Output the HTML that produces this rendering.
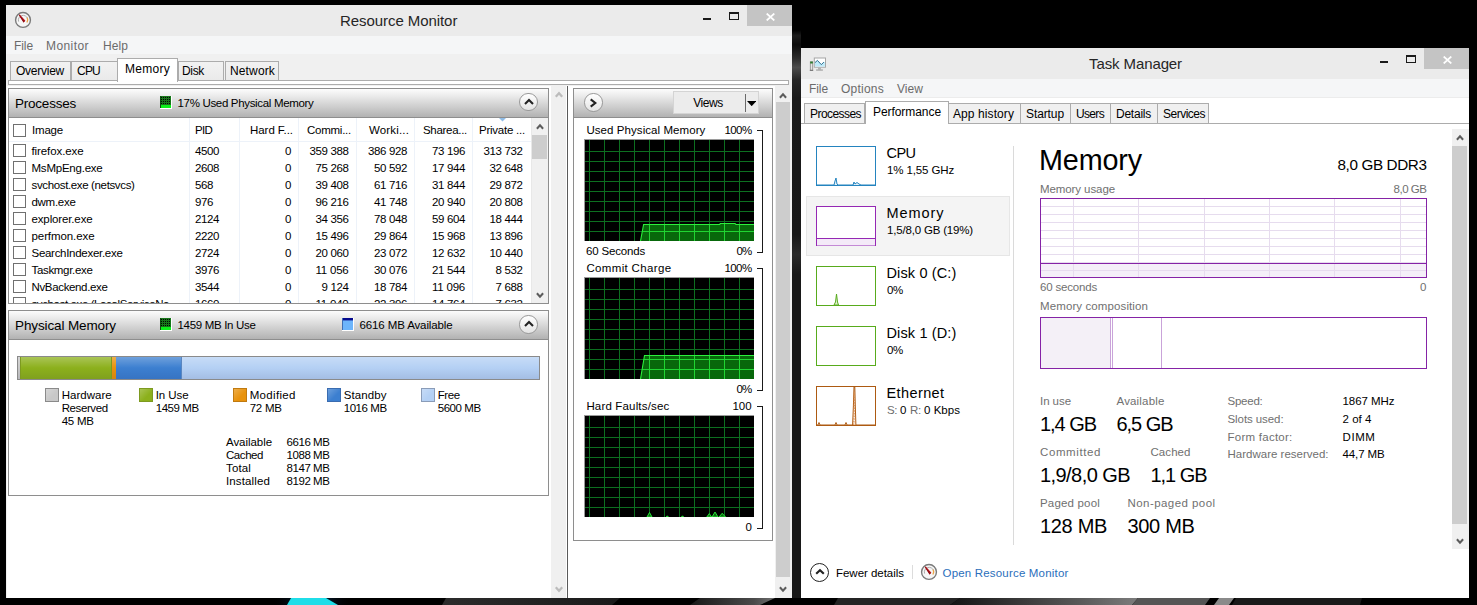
<!DOCTYPE html>
<html lang="en"><head><meta charset="utf-8"><title>Resource Monitor / Task Manager</title>
<style>
html,body{margin:0;padding:0}
body{width:1477px;height:605px;overflow:hidden;background:#000;position:relative;font-family:"Liberation Sans",sans-serif}
.bg{position:absolute;left:0;top:0;width:1477px;height:605px;background:#000}
.r{position:absolute;display:block}
.t{position:absolute;white-space:nowrap;line-height:1}
</style></head><body>
<div class="bg"></div>
<div class="r" style="left:792px;top:30px;width:9px;height:568px;background:linear-gradient(180deg,#000 0%,#1c1c1c 1%,#0c0c0c 2.6%,#2c2c2c 5%,#4c4c4c 6.6%,#262626 8.8%,#1a1a1a 12%,#181818 36%,#2a2a2a 39.5%,#181818 43%,#181818 100%)"></div>
<svg class="r" style="left:0;top:598px" width="1477" height="7" viewBox="0 0 1477 7"><defs><linearGradient id="wg1" x1="0" x2="1" y1="0" y2="0"><stop offset="0" stop-color="#2c2c2c"/><stop offset="1" stop-color="#1a1a1a"/></linearGradient><linearGradient id="wg2" x1="0" x2="1" y1="0" y2="0"><stop offset="0" stop-color="#181818"/><stop offset="0.75" stop-color="#4a4a4a"/><stop offset="1" stop-color="#707070"/></linearGradient><linearGradient id="wg3" x1="0" x2="1" y1="0" y2="0"><stop offset="0" stop-color="#141414"/><stop offset="0.7" stop-color="#5a5a5a"/><stop offset="1" stop-color="#7c7c7c"/></linearGradient><linearGradient id="wg4" x1="0" x2="1" y1="0" y2="0"><stop offset="0" stop-color="#000" stop-opacity="0"/><stop offset="0.5" stop-color="#0c3a66"/><stop offset="1" stop-color="#000" stop-opacity="0"/></linearGradient></defs><rect width="1477" height="7" fill="#000"/><rect x="272" y="0" width="80" height="7" fill="url(#wg4)"/><path d="M291 0 L326 0 L338 7 L287 7 Z" fill="#1fdde8"/><path d="M446 0 L620 0 L612 7 L442 7 Z" fill="url(#wg1)"/><path d="M700 0 L775 0 L760 7 L690 7 Z" fill="url(#wg2)"/><path d="M838 0 L960 0 L950 7 L834 7 Z" fill="#242424"/><path d="M960 0 L1138 0 L1132 7 L950 7 Z" fill="url(#wg3)"/><path d="M1138 0 L1210 0 L1205 7 L1132 7 Z" fill="#555"/><path d="M1219 0 L1234 0 L1229 7 L1214 7 Z" fill="#8a8a8a"/><path d="M1236 0 L1362 0 L1360 7 L1232 7 Z" fill="#1a1a1a"/></svg>
<div class="r" style="left:6px;top:5px;width:786px;height:593px;background:#f0f0f0"></div>
<div class="r" style="left:6px;top:5px;width:786px;height:31px;background:#ebebeb"></div>
<div class="r" style="left:6px;top:36px;width:786px;height:18px;background:#f5f6f7"></div>
<svg class="r" style="left:14px;top:11px" width="18" height="18" viewBox="0 0 18 18"><circle cx="9" cy="8.9" r="7.45" fill="#f6f6f6" stroke="#7a7a7a" stroke-width="1.4"/><path d="M4.6 10.6 A4.7 4.7 0 1 1 13.6 7.6" fill="none" stroke="#adadad" stroke-width="1"/><path d="M13.1 6.6 A4.7 4.7 0 0 1 12.9 11.5" fill="none" stroke="#e9a545" stroke-width="1.3"/><path d="M4.8 4.1 L5.8 3.6 L11.4 9.8 L9.6 11.4 Z" fill="#b5131b"/><path d="M4.8 4.1 L5.3 3.85 L10.5 10.6 L9.6 11.4 Z" fill="#8e0d13"/></svg>
<div class="t" style="left:340.0px;top:12.8px;font-size:15px;color:#262626;letter-spacing:-0.067px;">Resource Monitor</div>
<div class="r" style="left:703px;top:18px;width:8px;height:2px;background:#1a1a1a"></div>
<div class="r" style="left:729px;top:12px;width:10px;height:8px;border:1px solid #1a1a1a;border-top-width:2px;box-sizing:border-box"></div>
<div class="r" style="left:747px;top:5px;width:45px;height:21px;background:#c4c4c4"></div>
<svg class="r" style="left:765.5px;top:12.5px" width="9" height="8" viewBox="0 0 9 8"><path d="M0.7 0.5 L8.3 7.5 M8.3 0.5 L0.7 7.5" stroke="#fff" stroke-width="1.7" fill="none"/></svg>
<div class="t" style="left:14.0px;top:39.9px;font-size:12px;color:#6b6b6b;letter-spacing:-0.084px;">File</div>
<div class="t" style="left:46.0px;top:39.9px;font-size:12px;color:#6b6b6b;letter-spacing:0.427px;">Monitor</div>
<div class="t" style="left:103.0px;top:39.9px;font-size:12px;color:#6b6b6b;letter-spacing:0.080px;">Help</div>
<div class="r" style="left:8px;top:80px;width:781px;height:5px;background:#fff;border:1px solid #acacac;box-sizing:border-box"></div>
<div class="r" style="left:10px;top:60.5px;width:61px;height:20.5px;background:linear-gradient(180deg,#f2f2f2,#eaeaea);border:1px solid #acacac;box-sizing:border-box"></div>
<div class="t" style="left:16.0px;top:64.9px;font-size:12px;color:#000;letter-spacing:-0.251px;">Overview</div>
<div class="r" style="left:71px;top:60.5px;width:47px;height:20.5px;background:linear-gradient(180deg,#f2f2f2,#eaeaea);border:1px solid #acacac;box-sizing:border-box"></div>
<div class="t" style="left:77.0px;top:64.9px;font-size:12px;color:#000;letter-spacing:-0.779px;">CPU</div>
<div class="r" style="left:178px;top:60.5px;width:46px;height:20.5px;background:linear-gradient(180deg,#f2f2f2,#eaeaea);border:1px solid #acacac;box-sizing:border-box"></div>
<div class="t" style="left:182.0px;top:64.9px;font-size:12px;color:#000;letter-spacing:-0.333px;">Disk</div>
<div class="r" style="left:224.5px;top:60.5px;width:54px;height:20.5px;background:linear-gradient(180deg,#f2f2f2,#eaeaea);border:1px solid #acacac;box-sizing:border-box"></div>
<div class="t" style="left:230.0px;top:64.9px;font-size:12px;color:#000;letter-spacing:0.142px;">Network</div>
<div class="r" style="left:117px;top:58px;width:61px;height:24px;background:#fff;border:1px solid #acacac;border-bottom:none;box-sizing:border-box"></div>
<div class="t" style="left:125.0px;top:63.4px;font-size:12px;color:#000;letter-spacing:0.278px;">Memory</div>
<div class="r" style="left:7px;top:86px;width:785px;height:512px;background:#fff"></div>
<div class="r" style="left:551px;top:86px;width:15px;height:512px;background:#f0f0f0"></div>
<svg class="r" style="left:548.6px;top:85.2px" width="20" height="20" viewBox="0 0 20 20"><path d="M6.8 11.8 L10 8.2 L13.2 11.8" fill="none" stroke="#bcbcbc" stroke-width="2.2"/></svg>
<svg class="r" style="left:548.6px;top:579px" width="20" height="20" viewBox="0 0 20 20"><path d="M6.8 8.2 L10 11.8 L13.2 8.2" fill="none" stroke="#bcbcbc" stroke-width="2.2"/></svg>
<div class="r" style="left:567px;top:86px;width:1px;height:512px;background:#5a5a5a"></div>
<div class="r" style="left:775px;top:86px;width:17px;height:512px;background:#f0f0f0"></div>
<div class="r" style="left:775.5px;top:102px;width:14.5px;height:475.4px;background:#cdcdcd"></div>
<svg class="r" style="left:772.6px;top:85.6px" width="20" height="20" viewBox="0 0 20 20"><path d="M6.9 11.75 L10 8.25 L13.1 11.75" fill="none" stroke="#5c5c5c" stroke-width="2"/></svg>
<svg class="r" style="left:772.6px;top:578.5px" width="20" height="20" viewBox="0 0 20 20"><path d="M6.9 8.25 L10 11.75 L13.1 8.25" fill="none" stroke="#5c5c5c" stroke-width="2"/></svg>
<div class="r" style="left:8px;top:88px;width:541px;height:216px;border:1px solid #8e8e8e;box-sizing:border-box;background:#fff"></div>
<div class="r" style="left:9px;top:89px;width:539px;height:28px;background:linear-gradient(180deg,#fcfcfc 0%,#ededed 22%,#d4d4d4 55%,#b2b2b2 100%)"></div>
<div class="r" style="left:9px;top:117px;width:539px;height:1px;background:#8e8e8e"></div>
<div class="t" style="left:15.0px;top:96.6px;font-size:13.5px;color:#000;letter-spacing:-0.225px;">Processes</div>
<svg class="r" style="left:160px;top:96px" width="12" height="13" viewBox="0 0 12 13"><rect width="12" height="13" fill="#fff"/><rect x="0" y="0" width="11" height="12" fill="#17761a"/><path d="M1 1.5H11 M1 3.5H11 M1 5.5H11 M1 7.5H11" stroke="#020a02" stroke-width="1" stroke-dasharray="1 1" fill="none"/><rect x="1" y="9" width="10" height="3" fill="#0cf01a"/><rect x="0" y="0" width="1" height="12" fill="#0b4d0e"/></svg>
<div class="t" style="left:177.5px;top:97.7px;font-size:11.5px;color:#000;letter-spacing:-0.325px;">17% Used Physical Memory</div>
<div class="r" style="left:519.2px;top:93.1px;width:18.4px;height:18.4px;border-radius:50%;background:linear-gradient(180deg,#fff,#e4e4e4);border:1px solid #9a9a9a;box-sizing:border-box"></div>
<svg class="r" style="left:518.6px;top:91.9px" width="20" height="20" viewBox="0 0 20 20"><path d="M6 11.95 L10 8.05 L14 11.95" fill="none" stroke="#222" stroke-width="2.1"/></svg>
<div class="r" style="left:9px;top:141px;width:522px;height:1px;background:#edf2f9"></div>
<div class="r" style="left:189px;top:118px;width:1px;height:185px;background:#edf2f9"></div>
<div class="r" style="left:239px;top:118px;width:1px;height:185px;background:#edf2f9"></div>
<div class="r" style="left:298px;top:118px;width:1px;height:185px;background:#edf2f9"></div>
<div class="r" style="left:356px;top:118px;width:1px;height:185px;background:#edf2f9"></div>
<div class="r" style="left:414px;top:118px;width:1px;height:185px;background:#edf2f9"></div>
<div class="r" style="left:472px;top:118px;width:1px;height:185px;background:#edf2f9"></div>
<div class="r" style="left:531px;top:118px;width:1px;height:185px;background:#e8e8e8"></div>
<div class="r" style="left:13px;top:124px;width:13px;height:13px;border:1px solid #707070;background:#fff;box-sizing:border-box"></div>
<div class="t" style="left:32.0px;top:124.7px;font-size:11.5px;color:#000;letter-spacing:-0.192px;">Image</div>
<div class="t" style="left:195.0px;top:124.7px;font-size:11.5px;color:#000;letter-spacing:-0.724px;">PID</div>
<div class="t" style="left:250.0px;top:124.7px;font-size:11.5px;color:#000;letter-spacing:-0.050px;">Hard F...</div>
<div class="t" style="left:307.0px;top:124.7px;font-size:11.5px;color:#000;letter-spacing:-0.250px;">Commi...</div>
<div class="t" style="left:369.0px;top:124.7px;font-size:11.5px;color:#000;letter-spacing:0.155px;">Worki...</div>
<div class="t" style="left:423.0px;top:124.7px;font-size:11.5px;color:#000;letter-spacing:-0.296px;">Sharea...</div>
<div class="t" style="left:479.0px;top:124.7px;font-size:11.5px;color:#000;letter-spacing:-0.234px;">Private ...</div>
<svg class="r" style="left:499px;top:118px" width="7" height="4" viewBox="0 0 7 4"><path d="M0 0 L7 0 L3.5 3.6 Z" fill="#8fbce6"/></svg>
<div class="r" style="left:9px;top:142px;width:522px;height:161px;overflow:hidden">
<div class="r" style="left:4px;top:2px;width:13px;height:13px;border:1px solid #707070;background:#fff;box-sizing:border-box"></div>
<div class="t" style="left:22.5px;top:4.1px;font-size:11.5px;color:#000;letter-spacing:-0.095px;">firefox.exe</div>
<div class="t" style="left:186.0px;top:4.1px;font-size:11.5px;color:#000;letter-spacing:-0.395px;">4500</div>
<div class="t" style="left:276.0px;top:4.1px;font-size:11.5px;color:#000;letter-spacing:-0.395px;">0</div>
<div class="t" style="left:300.5px;top:4.1px;font-size:11.5px;color:#000;letter-spacing:-0.366px;">359 388</div>
<div class="t" style="left:359.0px;top:4.1px;font-size:11.5px;color:#000;letter-spacing:-0.366px;">386 928</div>
<div class="t" style="left:423.0px;top:4.1px;font-size:11.5px;color:#000;letter-spacing:-0.362px;">73 196</div>
<div class="t" style="left:474.5px;top:4.1px;font-size:11.5px;color:#000;letter-spacing:-0.366px;">313 732</div>
<div class="r" style="left:4px;top:19px;width:13px;height:13px;border:1px solid #707070;background:#fff;box-sizing:border-box"></div>
<div class="t" style="left:22.5px;top:21.1px;font-size:11.5px;color:#000;letter-spacing:-0.227px;">MsMpEng.exe</div>
<div class="t" style="left:186.0px;top:21.1px;font-size:11.5px;color:#000;letter-spacing:-0.395px;">2608</div>
<div class="t" style="left:276.0px;top:21.1px;font-size:11.5px;color:#000;letter-spacing:-0.395px;">0</div>
<div class="t" style="left:306.5px;top:21.1px;font-size:11.5px;color:#000;letter-spacing:-0.362px;">75 268</div>
<div class="t" style="left:365.0px;top:21.1px;font-size:11.5px;color:#000;letter-spacing:-0.362px;">50 592</div>
<div class="t" style="left:423.0px;top:21.1px;font-size:11.5px;color:#000;letter-spacing:-0.362px;">17 944</div>
<div class="t" style="left:480.5px;top:21.1px;font-size:11.5px;color:#000;letter-spacing:-0.362px;">32 648</div>
<div class="r" style="left:4px;top:36px;width:13px;height:13px;border:1px solid #707070;background:#fff;box-sizing:border-box"></div>
<div class="t" style="left:22.5px;top:38.1px;font-size:11.5px;color:#000;letter-spacing:-0.360px;">svchost.exe (netsvcs)</div>
<div class="t" style="left:186.0px;top:38.1px;font-size:11.5px;color:#000;letter-spacing:-0.395px;">568</div>
<div class="t" style="left:276.0px;top:38.1px;font-size:11.5px;color:#000;letter-spacing:-0.395px;">0</div>
<div class="t" style="left:306.5px;top:38.1px;font-size:11.5px;color:#000;letter-spacing:-0.362px;">39 408</div>
<div class="t" style="left:365.0px;top:38.1px;font-size:11.5px;color:#000;letter-spacing:-0.362px;">61 716</div>
<div class="t" style="left:423.0px;top:38.1px;font-size:11.5px;color:#000;letter-spacing:-0.362px;">31 844</div>
<div class="t" style="left:480.5px;top:38.1px;font-size:11.5px;color:#000;letter-spacing:-0.362px;">29 872</div>
<div class="r" style="left:4px;top:53px;width:13px;height:13px;border:1px solid #707070;background:#fff;box-sizing:border-box"></div>
<div class="t" style="left:22.5px;top:55.1px;font-size:11.5px;color:#000;letter-spacing:-0.288px;">dwm.exe</div>
<div class="t" style="left:186.0px;top:55.1px;font-size:11.5px;color:#000;letter-spacing:-0.395px;">976</div>
<div class="t" style="left:276.0px;top:55.1px;font-size:11.5px;color:#000;letter-spacing:-0.395px;">0</div>
<div class="t" style="left:306.5px;top:55.1px;font-size:11.5px;color:#000;letter-spacing:-0.362px;">96 216</div>
<div class="t" style="left:365.0px;top:55.1px;font-size:11.5px;color:#000;letter-spacing:-0.362px;">41 748</div>
<div class="t" style="left:423.0px;top:55.1px;font-size:11.5px;color:#000;letter-spacing:-0.362px;">20 940</div>
<div class="t" style="left:480.5px;top:55.1px;font-size:11.5px;color:#000;letter-spacing:-0.362px;">20 808</div>
<div class="r" style="left:4px;top:70px;width:13px;height:13px;border:1px solid #707070;background:#fff;box-sizing:border-box"></div>
<div class="t" style="left:22.5px;top:72.1px;font-size:11.5px;color:#000;letter-spacing:-0.137px;">explorer.exe</div>
<div class="t" style="left:186.0px;top:72.1px;font-size:11.5px;color:#000;letter-spacing:-0.395px;">2124</div>
<div class="t" style="left:276.0px;top:72.1px;font-size:11.5px;color:#000;letter-spacing:-0.395px;">0</div>
<div class="t" style="left:306.5px;top:72.1px;font-size:11.5px;color:#000;letter-spacing:-0.362px;">34 356</div>
<div class="t" style="left:365.0px;top:72.1px;font-size:11.5px;color:#000;letter-spacing:-0.362px;">78 048</div>
<div class="t" style="left:423.0px;top:72.1px;font-size:11.5px;color:#000;letter-spacing:-0.362px;">59 604</div>
<div class="t" style="left:480.5px;top:72.1px;font-size:11.5px;color:#000;letter-spacing:-0.362px;">18 444</div>
<div class="r" style="left:4px;top:87px;width:13px;height:13px;border:1px solid #707070;background:#fff;box-sizing:border-box"></div>
<div class="t" style="left:22.5px;top:89.1px;font-size:11.5px;color:#000;letter-spacing:-0.083px;">perfmon.exe</div>
<div class="t" style="left:186.0px;top:89.1px;font-size:11.5px;color:#000;letter-spacing:-0.395px;">2220</div>
<div class="t" style="left:276.0px;top:89.1px;font-size:11.5px;color:#000;letter-spacing:-0.395px;">0</div>
<div class="t" style="left:306.5px;top:89.1px;font-size:11.5px;color:#000;letter-spacing:-0.362px;">15 496</div>
<div class="t" style="left:365.0px;top:89.1px;font-size:11.5px;color:#000;letter-spacing:-0.362px;">29 864</div>
<div class="t" style="left:423.0px;top:89.1px;font-size:11.5px;color:#000;letter-spacing:-0.362px;">15 968</div>
<div class="t" style="left:480.5px;top:89.1px;font-size:11.5px;color:#000;letter-spacing:-0.362px;">13 896</div>
<div class="r" style="left:4px;top:104px;width:13px;height:13px;border:1px solid #707070;background:#fff;box-sizing:border-box"></div>
<div class="t" style="left:22.5px;top:106.1px;font-size:11.5px;color:#000;letter-spacing:-0.288px;">SearchIndexer.exe</div>
<div class="t" style="left:186.0px;top:106.1px;font-size:11.5px;color:#000;letter-spacing:-0.395px;">2724</div>
<div class="t" style="left:276.0px;top:106.1px;font-size:11.5px;color:#000;letter-spacing:-0.395px;">0</div>
<div class="t" style="left:306.5px;top:106.1px;font-size:11.5px;color:#000;letter-spacing:-0.362px;">20 060</div>
<div class="t" style="left:365.0px;top:106.1px;font-size:11.5px;color:#000;letter-spacing:-0.362px;">23 072</div>
<div class="t" style="left:423.0px;top:106.1px;font-size:11.5px;color:#000;letter-spacing:-0.362px;">12 632</div>
<div class="t" style="left:480.5px;top:106.1px;font-size:11.5px;color:#000;letter-spacing:-0.362px;">10 440</div>
<div class="r" style="left:4px;top:121px;width:13px;height:13px;border:1px solid #707070;background:#fff;box-sizing:border-box"></div>
<div class="t" style="left:22.5px;top:123.1px;font-size:11.5px;color:#000;letter-spacing:-0.323px;">Taskmgr.exe</div>
<div class="t" style="left:186.0px;top:123.1px;font-size:11.5px;color:#000;letter-spacing:-0.395px;">3976</div>
<div class="t" style="left:276.0px;top:123.1px;font-size:11.5px;color:#000;letter-spacing:-0.395px;">0</div>
<div class="t" style="left:306.5px;top:123.1px;font-size:11.5px;color:#000;letter-spacing:-0.219px;">11 056</div>
<div class="t" style="left:365.0px;top:123.1px;font-size:11.5px;color:#000;letter-spacing:-0.362px;">30 076</div>
<div class="t" style="left:423.0px;top:123.1px;font-size:11.5px;color:#000;letter-spacing:-0.362px;">21 544</div>
<div class="t" style="left:486.5px;top:123.1px;font-size:11.5px;color:#000;letter-spacing:-0.355px;">8 532</div>
<div class="r" style="left:4px;top:138px;width:13px;height:13px;border:1px solid #707070;background:#fff;box-sizing:border-box"></div>
<div class="t" style="left:22.5px;top:140.1px;font-size:11.5px;color:#000;letter-spacing:-0.349px;">NvBackend.exe</div>
<div class="t" style="left:186.0px;top:140.1px;font-size:11.5px;color:#000;letter-spacing:-0.395px;">3544</div>
<div class="t" style="left:276.0px;top:140.1px;font-size:11.5px;color:#000;letter-spacing:-0.395px;">0</div>
<div class="t" style="left:312.5px;top:140.1px;font-size:11.5px;color:#000;letter-spacing:-0.355px;">9 124</div>
<div class="t" style="left:365.0px;top:140.1px;font-size:11.5px;color:#000;letter-spacing:-0.362px;">18 784</div>
<div class="t" style="left:423.0px;top:140.1px;font-size:11.5px;color:#000;letter-spacing:-0.219px;">11 096</div>
<div class="t" style="left:486.5px;top:140.1px;font-size:11.5px;color:#000;letter-spacing:-0.355px;">7 688</div>
<div class="r" style="left:4px;top:155px;width:13px;height:13px;border:1px solid #707070;background:#fff;box-sizing:border-box"></div>
<div class="t" style="left:22.5px;top:157.1px;font-size:11.5px;color:#000;letter-spacing:-0.395px;">svchost.exe (LocalServiceNo...</div>
<div class="t" style="left:186.0px;top:157.1px;font-size:11.5px;color:#000;letter-spacing:-0.395px;">1660</div>
<div class="t" style="left:276.0px;top:157.1px;font-size:11.5px;color:#000;letter-spacing:-0.395px;">0</div>
<div class="t" style="left:306.5px;top:157.1px;font-size:11.5px;color:#000;letter-spacing:-0.219px;">11 040</div>
<div class="t" style="left:365.0px;top:157.1px;font-size:11.5px;color:#000;letter-spacing:-0.362px;">22 396</div>
<div class="t" style="left:423.0px;top:157.1px;font-size:11.5px;color:#000;letter-spacing:-0.362px;">14 764</div>
<div class="t" style="left:486.5px;top:157.1px;font-size:11.5px;color:#000;letter-spacing:-0.355px;">7 632</div>
</div>
<div class="r" style="left:532px;top:118px;width:16px;height:185px;background:#f0f0f0"></div>
<div class="r" style="left:532px;top:135px;width:15px;height:24px;background:#cdcdcd"></div>
<svg class="r" style="left:529.6px;top:117.4px" width="20" height="20" viewBox="0 0 20 20"><path d="M6.9 11.75 L10 8.25 L13.1 11.75" fill="none" stroke="#5c5c5c" stroke-width="2"/></svg>
<svg class="r" style="left:529.5px;top:284.6px" width="20" height="20" viewBox="0 0 20 20"><path d="M6.9 8.25 L10 11.75 L13.1 8.25" fill="none" stroke="#5c5c5c" stroke-width="2"/></svg>
<div class="r" style="left:8px;top:310px;width:541px;height:186px;border:1px solid #8e8e8e;box-sizing:border-box;background:#fff"></div>
<div class="r" style="left:9px;top:311px;width:539px;height:28px;background:linear-gradient(180deg,#fcfcfc 0%,#ededed 22%,#d4d4d4 55%,#b2b2b2 100%)"></div>
<div class="r" style="left:9px;top:339px;width:539px;height:1px;background:#8e8e8e"></div>
<div class="t" style="left:15.0px;top:318.6px;font-size:13.5px;color:#000;letter-spacing:-0.118px;">Physical Memory</div>
<svg class="r" style="left:160px;top:318px" width="12" height="13" viewBox="0 0 12 13"><rect width="12" height="13" fill="#fff"/><rect x="0" y="0" width="11" height="12" fill="#17761a"/><path d="M1 1.5H11 M1 3.5H11 M1 5.5H11 M1 7.5H11" stroke="#020a02" stroke-width="1" stroke-dasharray="1 1" fill="none"/><rect x="1" y="9" width="10" height="3" fill="#0cf01a"/><rect x="0" y="0" width="1" height="12" fill="#0b4d0e"/></svg>
<div class="t" style="left:177.5px;top:319.7px;font-size:11.5px;color:#000;letter-spacing:-0.318px;">1459 MB In Use</div>
<svg class="r" style="left:342px;top:318px" width="12" height="13" viewBox="0 0 12 13"><rect width="12" height="13" fill="#fff"/><rect x="0" y="0" width="11" height="12" fill="#6db5fb"/><rect x="0" y="0" width="11" height="2.4" fill="#050a8e"/><rect x="0" y="0" width="1" height="12" fill="#3f6fb4"/></svg>
<div class="t" style="left:359.5px;top:319.7px;font-size:11.5px;color:#000;letter-spacing:-0.120px;">6616 MB Available</div>
<div class="r" style="left:519.2px;top:315.3px;width:18.4px;height:18.4px;border-radius:50%;background:linear-gradient(180deg,#fff,#e4e4e4);border:1px solid #9a9a9a;box-sizing:border-box"></div>
<svg class="r" style="left:518.6px;top:314.1px" width="20" height="20" viewBox="0 0 20 20"><path d="M6 11.95 L10 8.05 L14 11.95" fill="none" stroke="#222" stroke-width="2.1"/></svg>
<div class="r" style="left:17px;top:356px;width:523px;height:24px;border:1px solid #8a8a8a;box-sizing:border-box;background:linear-gradient(180deg,rgba(255,255,255,.26) 0%,rgba(255,255,255,0) 50%,rgba(0,0,60,.09) 100%),linear-gradient(90deg,#c8c8c8 0,#c8c8c8 2px,#8cb01c 2px,#8cb01c 93.5px,#e8920c 93.5px,#e8920c 98.5px,#3c7fd0 98.5px,#3c7fd0 163.5px,#b4d0f4 163.5px)"></div>
<div class="r" style="left:20px;top:357px;width:1px;height:22px;background:#7d9a20"></div>
<div class="r" style="left:111px;top:357px;width:1px;height:22px;background:#7d9a20"></div>
<div class="r" style="left:181px;top:357px;width:1px;height:22px;background:#5a86c0"></div>
<div class="r" style="left:44.7px;top:388px;width:14px;height:14px;background:linear-gradient(135deg,rgba(255,255,255,.25),rgba(255,255,255,0) 60%),#c8c8c8;border:1px solid #8a8a8a;box-sizing:border-box"></div>
<div class="t" style="left:61.7px;top:389.7px;font-size:11.5px;color:#000;letter-spacing:0.019px;">Hardware</div>
<div class="t" style="left:61.7px;top:402.7px;font-size:11.5px;color:#000;letter-spacing:-0.402px;">Reserved</div>
<div class="t" style="left:61.7px;top:415.7px;font-size:11.5px;color:#000;letter-spacing:-0.247px;">45 MB</div>
<div class="r" style="left:138.7px;top:388px;width:14px;height:14px;background:linear-gradient(135deg,rgba(255,255,255,.25),rgba(255,255,255,0) 60%),#8cb01c;border:1px solid #7d9a20;box-sizing:border-box"></div>
<div class="t" style="left:155.7px;top:389.7px;font-size:11.5px;color:#000;letter-spacing:-0.039px;">In Use</div>
<div class="t" style="left:155.7px;top:402.7px;font-size:11.5px;color:#000;letter-spacing:-0.432px;">1459 MB</div>
<div class="r" style="left:232.7px;top:388px;width:14px;height:14px;background:linear-gradient(135deg,rgba(255,255,255,.25),rgba(255,255,255,0) 60%),#e8920c;border:1px solid #c07a10;box-sizing:border-box"></div>
<div class="t" style="left:249.7px;top:389.7px;font-size:11.5px;color:#000;letter-spacing:0.317px;">Modified</div>
<div class="t" style="left:249.7px;top:402.7px;font-size:11.5px;color:#000;letter-spacing:-0.247px;">72 MB</div>
<div class="r" style="left:326.7px;top:388px;width:14px;height:14px;background:linear-gradient(135deg,rgba(255,255,255,.25),rgba(255,255,255,0) 60%),#3c7fd0;border:1px solid #3a6cb0;box-sizing:border-box"></div>
<div class="t" style="left:343.7px;top:389.7px;font-size:11.5px;color:#000;letter-spacing:0.115px;">Standby</div>
<div class="t" style="left:343.7px;top:402.7px;font-size:11.5px;color:#000;letter-spacing:-0.432px;">1016 MB</div>
<div class="r" style="left:420.7px;top:388px;width:14px;height:14px;background:linear-gradient(135deg,rgba(255,255,255,.25),rgba(255,255,255,0) 60%),#b4d0f4;border:1px solid #8a9cb8;box-sizing:border-box"></div>
<div class="t" style="left:437.7px;top:389.7px;font-size:11.5px;color:#000;letter-spacing:-0.411px;">Free</div>
<div class="t" style="left:437.7px;top:402.7px;font-size:11.5px;color:#000;letter-spacing:-0.432px;">5600 MB</div>
<div class="t" style="left:226.0px;top:436.7px;font-size:11.5px;color:#000;letter-spacing:-0.051px;">Available</div>
<div class="t" style="left:286.5px;top:436.7px;font-size:11.5px;color:#000;letter-spacing:-0.432px;">6616 MB</div>
<div class="t" style="left:226.0px;top:449.7px;font-size:11.5px;color:#000;letter-spacing:-0.439px;">Cached</div>
<div class="t" style="left:286.5px;top:449.7px;font-size:11.5px;color:#000;letter-spacing:-0.432px;">1088 MB</div>
<div class="t" style="left:226.0px;top:462.7px;font-size:11.5px;color:#000;letter-spacing:0.142px;">Total</div>
<div class="t" style="left:286.5px;top:462.7px;font-size:11.5px;color:#000;letter-spacing:-0.432px;">8147 MB</div>
<div class="t" style="left:226.0px;top:475.7px;font-size:11.5px;color:#000;letter-spacing:0.130px;">Installed</div>
<div class="t" style="left:286.5px;top:475.7px;font-size:11.5px;color:#000;letter-spacing:-0.432px;">8192 MB</div>
<div class="r" style="left:573px;top:88px;width:200px;height:453px;border:1px solid #8e8e8e;box-sizing:border-box;background:#fff"></div>
<div class="r" style="left:574px;top:89px;width:198px;height:28px;background:linear-gradient(180deg,#fcfcfc 0%,#ededed 22%,#d4d4d4 55%,#b2b2b2 100%)"></div>
<div class="r" style="left:574px;top:117px;width:198px;height:1px;background:#8e8e8e"></div>
<div class="r" style="left:584.3px;top:93.4px;width:18.4px;height:18.4px;border-radius:50%;background:linear-gradient(180deg,#fff,#e4e4e4);border:1px solid #9a9a9a;box-sizing:border-box"></div>
<svg class="r" style="left:583.2px;top:92.6px" width="20" height="20" viewBox="0 0 20 20"><path d="M7.7 6.4 L12.3 10 L7.7 13.6" fill="none" stroke="#222" stroke-width="2.1"/></svg>
<div class="r" style="left:673px;top:91px;width:86px;height:23px;background:#ececec;border:1px solid #d4d4d4;box-sizing:border-box"></div>
<div class="t" style="left:693.3px;top:96.9px;font-size:12px;color:#000;letter-spacing:-0.459px;">Views</div>
<div class="r" style="left:745px;top:94px;width:1px;height:18px;background:#6a6a6a"></div>
<svg class="r" style="left:747px;top:101px" width="9.4" height="5.2" viewBox="0 0 9.4 5.2"><path d="M0 0 L9.4 0 L4.7 5.2 Z" fill="#000"/></svg>
<div class="t" style="left:586.4px;top:124.7px;font-size:11.5px;color:#000;letter-spacing:0.071px;">Used Physical Memory</div>
<div class="t" style="left:724.5px;top:124.7px;font-size:11.5px;color:#000;letter-spacing:-0.603px;">100%</div>
<svg class="r" style="left:584px;top:139px" width="170" height="102" viewBox="-1 -1 170 102"><rect x="-1" y="-1" width="170" height="102" fill="#9a9a9a"/><rect width="169" height="101" fill="#000"/><path d="M4.5 0V101 M19.5 0V101 M34.5 0V101 M49.5 0V101 M64.5 0V101 M79.5 0V101 M94.5 0V101 M109.5 0V101 M124.5 0V101 M139.5 0V101 M154.5 0V101 M169.5 0V101 M0 11.5H169 M0 21.5H169 M0 31.5H169 M0 41.5H169 M0 51.5H169 M0 61.5H169 M0 71.5H169 M0 81.5H169 M0 91.5H169" stroke="#0d6f20" stroke-width="1" fill="none"/><clipPath id="gc1"><path d="M55.5 101 L58.6 84.5 L134.5 84.5 L135.5 83.5 L150 83.5 L151 84.5 L169 84.5 L169 101 Z"/></clipPath><path d="M55.5 101 L58.6 84.5 L134.5 84.5 L135.5 83.5 L150 83.5 L151 84.5 L169 84.5 L169 101 Z" fill="#08680b"/><path d="M4.5 0V101 M19.5 0V101 M34.5 0V101 M49.5 0V101 M64.5 0V101 M79.5 0V101 M94.5 0V101 M109.5 0V101 M124.5 0V101 M139.5 0V101 M154.5 0V101 M169.5 0V101 M0 11.5H169 M0 21.5H169 M0 31.5H169 M0 41.5H169 M0 51.5H169 M0 61.5H169 M0 71.5H169 M0 81.5H169 M0 91.5H169" stroke="#20d532" stroke-width="1" fill="none" clip-path="url(#gc1)"/><path d="M55.5 101 L58.6 84.5 L134.5 84.5 L135.5 83.5 L150 83.5 L151 84.5 L169 84.5" fill="none" stroke="#2cf03c" stroke-width="1.1"/></svg>
<div class="t" style="left:586.0px;top:245.7px;font-size:11.5px;color:#000;letter-spacing:-0.174px;">60 Seconds</div>
<div class="t" style="left:736.5px;top:245.7px;font-size:11.5px;color:#000;letter-spacing:-0.811px;">0%</div>
<div class="r" style="left:757px;top:130px;width:6px;height:123px;border:1px solid #1a1a1a;border-left:none;box-sizing:border-box"></div>
<div class="t" style="left:586.4px;top:262.7px;font-size:11.5px;color:#000;letter-spacing:0.345px;">Commit Charge</div>
<div class="t" style="left:724.5px;top:262.7px;font-size:11.5px;color:#000;letter-spacing:-0.603px;">100%</div>
<svg class="r" style="left:584px;top:277px" width="170" height="102" viewBox="-1 -1 170 102"><rect x="-1" y="-1" width="170" height="102" fill="#9a9a9a"/><rect width="169" height="101" fill="#000"/><path d="M4.5 0V101 M19.5 0V101 M34.5 0V101 M49.5 0V101 M64.5 0V101 M79.5 0V101 M94.5 0V101 M109.5 0V101 M124.5 0V101 M139.5 0V101 M154.5 0V101 M169.5 0V101 M0 11.5H169 M0 21.5H169 M0 31.5H169 M0 41.5H169 M0 51.5H169 M0 61.5H169 M0 71.5H169 M0 81.5H169 M0 91.5H169" stroke="#0d6f20" stroke-width="1" fill="none"/><clipPath id="gc2"><path d="M55.5 101 L59.5 77.5 L169 77.5 L169 101 Z"/></clipPath><path d="M55.5 101 L59.5 77.5 L169 77.5 L169 101 Z" fill="#08680b"/><path d="M4.5 0V101 M19.5 0V101 M34.5 0V101 M49.5 0V101 M64.5 0V101 M79.5 0V101 M94.5 0V101 M109.5 0V101 M124.5 0V101 M139.5 0V101 M154.5 0V101 M169.5 0V101 M0 11.5H169 M0 21.5H169 M0 31.5H169 M0 41.5H169 M0 51.5H169 M0 61.5H169 M0 71.5H169 M0 81.5H169 M0 91.5H169" stroke="#20d532" stroke-width="1" fill="none" clip-path="url(#gc2)"/><path d="M55.5 101 L59.5 77.5 L169 77.5" fill="none" stroke="#2cf03c" stroke-width="1.1"/></svg>
<div class="t" style="left:736.5px;top:383.7px;font-size:11.5px;color:#000;letter-spacing:-0.811px;">0%</div>
<div class="r" style="left:757px;top:268px;width:6px;height:123px;border:1px solid #1a1a1a;border-left:none;box-sizing:border-box"></div>
<div class="t" style="left:586.4px;top:400.7px;font-size:11.5px;color:#000;letter-spacing:0.165px;">Hard Faults/sec</div>
<div class="t" style="left:732.5px;top:400.7px;font-size:11.5px;color:#000;letter-spacing:-0.062px;">100</div>
<svg class="r" style="left:584px;top:415px" width="170" height="102" viewBox="-1 -1 170 102"><rect x="-1" y="-1" width="170" height="102" fill="#9a9a9a"/><rect width="169" height="101" fill="#000"/><path d="M4.5 0V101 M19.5 0V101 M34.5 0V101 M49.5 0V101 M64.5 0V101 M79.5 0V101 M94.5 0V101 M109.5 0V101 M124.5 0V101 M139.5 0V101 M154.5 0V101 M169.5 0V101 M0 11.5H169 M0 21.5H169 M0 31.5H169 M0 41.5H169 M0 51.5H169 M0 61.5H169 M0 71.5H169 M0 81.5H169 M0 91.5H169" stroke="#0d6f20" stroke-width="1" fill="none"/><path d="M62 101 L64.5 96.5 L67 101 Z M81.3 101 L82.3 99.8 L83.3 101 Z M96.5 101 L97.5 99.8 L98.5 101 Z M121.8 101 L124.3 97.6 L126.6 101 Z M127 101 L130 96 L133 101 Z M134 101 L137.2 97.3 L140.5 101 Z" fill="#0b6a12" stroke="#2cf03c" stroke-width="0.9"/></svg>
<div class="t" style="left:745.5px;top:521.7px;font-size:11.5px;color:#000;letter-spacing:-0.395px;">0</div>
<div class="r" style="left:757px;top:406px;width:6px;height:123px;border:1px solid #1a1a1a;border-left:none;box-sizing:border-box"></div>
<div class="r" style="left:801px;top:48px;width:668px;height:550px;background:#fff"></div>
<div class="r" style="left:801px;top:48px;width:668px;height:31px;background:#ebebeb"></div>
<div class="r" style="left:801px;top:79px;width:668px;height:18px;background:#f5f6f7"></div>
<div class="r" style="left:801px;top:97px;width:668px;height:1px;background:#ececec"></div>
<svg class="r" style="left:809px;top:56px" width="18" height="16" viewBox="0 0 18 16"><rect x="1.3" y="5.8" width="2.4" height="8.4" fill="#e6e6e6" stroke="#8c8c8c" stroke-width="0.8"/><rect x="1.2" y="5.6" width="2.6" height="1.9" fill="#2b7a2b"/><rect x="0.8" y="13.9" width="3.4" height="0.9" fill="#6e6e6e"/><rect x="5.3" y="2" width="11.2" height="9.2" fill="#fff" stroke="#a6a6a6" stroke-width="1"/><path d="M5.9 6.6 L8.4 4.4 L12.3 8.6 L14.9 6.1 L15.9 6.1 L15.9 10.6 L5.9 10.6 Z" fill="#bfeaf9"/><path d="M6 6.6 L8.4 4.4 L12.3 8.6 L14.9 6.1" fill="none" stroke="#2d6f8f" stroke-width="1"/><rect x="9" y="11.6" width="3" height="1.9" fill="#b4b4b4"/><rect x="7.1" y="13.5" width="6.8" height="1.1" fill="#9a9a9a"/></svg>
<div class="t" style="left:1089.0px;top:55.8px;font-size:15px;color:#262626;letter-spacing:-0.100px;">Task Manager</div>
<div class="r" style="left:1380px;top:61px;width:8px;height:2px;background:#1a1a1a"></div>
<div class="r" style="left:1406px;top:55px;width:10px;height:8px;border:1px solid #1a1a1a;border-top-width:2px;box-sizing:border-box"></div>
<div class="r" style="left:1424px;top:48px;width:45px;height:21px;background:#c4c4c4"></div>
<svg class="r" style="left:1442.5px;top:55.5px" width="9" height="8" viewBox="0 0 9 8"><path d="M0.7 0.5 L8.3 7.5 M8.3 0.5 L0.7 7.5" stroke="#fff" stroke-width="1.7" fill="none"/></svg>
<div class="t" style="left:809.0px;top:82.9px;font-size:12px;color:#6b6b6b;letter-spacing:-0.084px;">File</div>
<div class="t" style="left:841.0px;top:82.9px;font-size:12px;color:#6b6b6b;letter-spacing:0.235px;">Options</div>
<div class="t" style="left:897.0px;top:82.9px;font-size:12px;color:#6b6b6b;letter-spacing:0.052px;">View</div>
<div class="r" style="left:801px;top:123px;width:668px;height:1px;background:#acacac"></div>
<div class="r" style="left:803.5px;top:103px;width:61.5px;height:20px;background:#f0f0f0;border:1px solid #acacac;border-bottom:none;box-sizing:border-box"></div>
<div class="t" style="left:810.0px;top:107.9px;font-size:12px;color:#000;letter-spacing:-0.558px;">Processes</div>
<div class="r" style="left:948px;top:103px;width:72.5px;height:20px;background:#f0f0f0;border:1px solid #acacac;border-bottom:none;box-sizing:border-box"></div>
<div class="t" style="left:953.0px;top:107.9px;font-size:12px;color:#000;letter-spacing:0.089px;">App history</div>
<div class="r" style="left:1019.5px;top:103px;width:51px;height:20px;background:#f0f0f0;border:1px solid #acacac;border-bottom:none;box-sizing:border-box"></div>
<div class="t" style="left:1026.0px;top:107.9px;font-size:12px;color:#000;letter-spacing:-0.098px;">Startup</div>
<div class="r" style="left:1069.5px;top:103px;width:41px;height:20px;background:#f0f0f0;border:1px solid #acacac;border-bottom:none;box-sizing:border-box"></div>
<div class="t" style="left:1076.0px;top:107.9px;font-size:12px;color:#000;letter-spacing:-0.667px;">Users</div>
<div class="r" style="left:1109.5px;top:103px;width:48px;height:20px;background:#f0f0f0;border:1px solid #acacac;border-bottom:none;box-sizing:border-box"></div>
<div class="t" style="left:1116.0px;top:107.9px;font-size:12px;color:#000;letter-spacing:-0.240px;">Details</div>
<div class="r" style="left:1156.5px;top:103px;width:52.5px;height:20px;background:#f0f0f0;border:1px solid #acacac;border-bottom:none;box-sizing:border-box"></div>
<div class="t" style="left:1163.0px;top:107.9px;font-size:12px;color:#000;letter-spacing:-0.502px;">Services</div>
<div class="r" style="left:865px;top:101px;width:84px;height:23px;background:#fff;border:1px solid #acacac;border-bottom:none;box-sizing:border-box"></div>
<div class="t" style="left:873.0px;top:106.4px;font-size:12px;color:#000;letter-spacing:-0.063px;">Performance</div>
<div class="r" style="left:1452px;top:129px;width:17px;height:420px;background:#f0f0f0"></div>
<div class="r" style="left:1452px;top:146px;width:15px;height:378px;background:#cdcdcd"></div>
<svg class="r" style="left:1449.5px;top:128px" width="20" height="20" viewBox="0 0 20 20"><path d="M6.9 11.75 L10 8.25 L13.1 11.75" fill="none" stroke="#5c5c5c" stroke-width="2"/></svg>
<svg class="r" style="left:1449.5px;top:530.5px" width="20" height="20" viewBox="0 0 20 20"><path d="M6.9 8.25 L10 11.75 L13.1 8.25" fill="none" stroke="#5c5c5c" stroke-width="2"/></svg>
<div class="r" style="left:806px;top:196px;width:204px;height:60px;background:#f4f4f4;border:1px solid #e6e6e6;box-sizing:border-box"></div>
<div class="r" style="left:1013px;top:146px;width:1px;height:399px;background:#dadada"></div>
<svg class="r" style="left:816px;top:146px" width="60" height="40" viewBox="0 0 60 40"><rect x="0.5" y="0.5" width="59" height="39" fill="#fff" stroke="#2484bf"/><path d="M1 39 L18 39 L19 35 L20 32 L21 38 L22 39 L37 39 L38 36 L39 38 L41 36.5 L43 38 L45 39 L59 39" fill="#e6f2fa" stroke="#2484bf" stroke-width="1"/></svg>
<div class="t" style="left:886.5px;top:145.7px;font-size:14.5px;color:#000;letter-spacing:-0.538px;">CPU</div>
<div class="t" style="left:887.0px;top:164.9px;font-size:11.5px;color:#000;letter-spacing:-0.126px;">1% 1,55 GHz</div>
<svg class="r" style="left:816px;top:206px" width="60" height="40" viewBox="0 0 60 40"><rect x="0.5" y="0.5" width="59" height="39" fill="#fff" stroke="#9528b4"/><rect x="1" y="32.5" width="58" height="7" fill="#f4eaf8"/><path d="M1 32.5 H59" stroke="#9528b4" stroke-width="1"/></svg>
<div class="t" style="left:886.5px;top:205.7px;font-size:14.5px;color:#000;letter-spacing:0.940px;">Memory</div>
<div class="t" style="left:887.0px;top:224.9px;font-size:11.5px;color:#000;letter-spacing:-0.178px;">1,5/8,0 GB (19%)</div>
<svg class="r" style="left:816px;top:266px" width="60" height="40" viewBox="0 0 60 40"><rect x="0.5" y="0.5" width="59" height="39" fill="#fff" stroke="#58ab1c"/><path d="M18 39 L19.5 36 L20.5 28 L21.5 36 L22.5 39 Z" fill="#dff0d0" stroke="#58ab1c" stroke-width="1"/></svg>
<div class="t" style="left:886.5px;top:265.7px;font-size:14.5px;color:#000;letter-spacing:0.139px;">Disk 0 (C:)</div>
<div class="t" style="left:887.0px;top:284.9px;font-size:11.5px;color:#000;letter-spacing:-0.311px;">0%</div>
<svg class="r" style="left:816px;top:326px" width="60" height="40" viewBox="0 0 60 40"><rect x="0.5" y="0.5" width="59" height="39" fill="#fff" stroke="#58ab1c"/></svg>
<div class="t" style="left:886.5px;top:325.7px;font-size:14.5px;color:#000;letter-spacing:0.139px;">Disk 1 (D:)</div>
<div class="t" style="left:887.0px;top:344.9px;font-size:11.5px;color:#000;letter-spacing:-0.311px;">0%</div>
<svg class="r" style="left:816px;top:386px" width="60" height="40" viewBox="0 0 60 40"><rect x="0.5" y="0.5" width="59" height="39" fill="#fff" stroke="#ad5a12"/><path d="M1 39 L2 39 L3 36.5 L4 39 L19 39 L20 36.5 L21 39 L29 39 L30 36.5 L31 39 L36.6 39 L37.4 20 L38 1 L38.8 1 L39.3 20 L39.9 39 L59 39" fill="#fcf3eb" stroke="#ad5a12" stroke-width="1"/><path d="M37.5 39 L38.3 6 L39 39" fill="none" stroke="#d98a4a" stroke-width="0.8" stroke-dasharray="1.5 1.2"/></svg>
<div class="t" style="left:886.5px;top:385.7px;font-size:14.5px;color:#000;letter-spacing:0.399px;">Ethernet</div>
<div class="t" style="left:887.0px;top:404.9px;font-size:11.5px;color:#000;letter-spacing:0.000px;"></div>
<div class="t" style="left:887.0px;top:404.9px;font-size:11.5px;color:#6d6d6d;letter-spacing:-0.433px;">S:</div>
<div class="t" style="left:900.0px;top:404.9px;font-size:11.5px;color:#000;letter-spacing:0.105px;">0</div>
<div class="t" style="left:910.0px;top:404.9px;font-size:11.5px;color:#6d6d6d;letter-spacing:-0.250px;">R:</div>
<div class="t" style="left:924.0px;top:404.9px;font-size:11.5px;color:#000;letter-spacing:0.033px;">0 Kbps</div>
<div class="t" style="left:1039.0px;top:146.0px;font-size:28.75px;color:#000;letter-spacing:-0.136px;">Memory</div>
<div class="t" style="left:1337.5px;top:156.9px;font-size:15.25px;color:#000;letter-spacing:-0.384px;">8,0 GB DDR3</div>
<div class="t" style="left:1040.0px;top:183.7px;font-size:11.5px;color:#707070;letter-spacing:-0.088px;">Memory usage</div>
<div class="t" style="left:1393.5px;top:183.7px;font-size:11.5px;color:#707070;letter-spacing:-0.466px;">8,0 GB</div>
<svg class="r" style="left:1040px;top:198px" width="387" height="80" viewBox="0 0 387 80"><rect x="0.5" y="0.5" width="386" height="79" fill="#fff"/><rect x="1" y="65" width="385" height="14" fill="#f4eff8"/><path d="M1 8.5H386 M1 16.5H386 M1 24.5H386 M1 32.5H386 M1 40.5H386 M1 48.5H386 M1 56.5H386 M1 64.5H386 M1 72.5H386 M33.5 1V79 M98.5 1V79 M164.5 1V79 M229.5 1V79 M294.5 1V79 M360.5 1V79" stroke="#e6dcee" stroke-width="1" fill="none"/><path d="M1 65.5H386" stroke="#8523a6" stroke-width="1" fill="none"/><rect x="0.5" y="0.5" width="386" height="79" fill="none" stroke="#8523a6"/></svg>
<div class="t" style="left:1040.0px;top:281.7px;font-size:11.5px;color:#707070;letter-spacing:-0.182px;">60 seconds</div>
<div class="t" style="left:1420.0px;top:281.7px;font-size:11.5px;color:#707070;letter-spacing:0.105px;">0</div>
<div class="t" style="left:1040.0px;top:300.7px;font-size:11.5px;color:#707070;letter-spacing:0.107px;">Memory composition</div>
<svg class="r" style="left:1040px;top:317px" width="387" height="52" viewBox="0 0 387 52"><rect x="0.5" y="0.5" width="386" height="51" fill="#fff"/><rect x="1" y="1" width="70" height="50" fill="#f4f0f7"/><path d="M70.5 1V51 M72.5 1V51 M121.5 1V51" stroke="#c9a3d9" stroke-width="1" fill="none"/><rect x="0.5" y="0.5" width="386" height="51" fill="none" stroke="#8523a6"/></svg>
<div class="t" style="left:1040.0px;top:395.9px;font-size:11.5px;color:#707070;letter-spacing:-0.054px;">In use</div>
<div class="t" style="left:1116.5px;top:395.9px;font-size:11.5px;color:#707070;letter-spacing:0.171px;">Available</div>
<div class="t" style="left:1040.0px;top:413.8px;font-size:20px;color:#000;letter-spacing:-1.042px;">1,4 GB</div>
<div class="t" style="left:1116.5px;top:413.8px;font-size:20px;color:#000;letter-spacing:-1.042px;">6,5 GB</div>
<div class="t" style="left:1040.0px;top:446.9px;font-size:11.5px;color:#707070;letter-spacing:0.601px;">Committed</div>
<div class="t" style="left:1150.5px;top:446.9px;font-size:11.5px;color:#707070;letter-spacing:0.061px;">Cached</div>
<div class="t" style="left:1040.0px;top:464.8px;font-size:20px;color:#000;letter-spacing:-0.561px;">1,9/8,0 GB</div>
<div class="t" style="left:1150.5px;top:464.8px;font-size:20px;color:#000;letter-spacing:-1.042px;">1,1 GB</div>
<div class="t" style="left:1040.0px;top:497.9px;font-size:11.5px;color:#707070;letter-spacing:0.181px;">Paged pool</div>
<div class="t" style="left:1127.5px;top:497.9px;font-size:11.5px;color:#707070;letter-spacing:0.440px;">Non-paged pool</div>
<div class="t" style="left:1040.0px;top:515.8px;font-size:20px;color:#000;letter-spacing:-0.320px;">128 MB</div>
<div class="t" style="left:1127.5px;top:515.8px;font-size:20px;color:#000;letter-spacing:-0.320px;">300 MB</div>
<div class="t" style="left:1227.5px;top:395.7px;font-size:11.5px;color:#707070;letter-spacing:-0.241px;">Speed:</div>
<div class="t" style="left:1342.5px;top:395.7px;font-size:11.5px;color:#000;letter-spacing:-0.051px;">1867 MHz</div>
<div class="t" style="left:1227.5px;top:413.6px;font-size:11.5px;color:#707070;letter-spacing:-0.081px;">Slots used:</div>
<div class="t" style="left:1342.5px;top:413.6px;font-size:11.5px;color:#000;letter-spacing:0.038px;">2 of 4</div>
<div class="t" style="left:1227.5px;top:431.5px;font-size:11.5px;color:#707070;letter-spacing:0.252px;">Form factor:</div>
<div class="t" style="left:1342.5px;top:431.5px;font-size:11.5px;color:#000;letter-spacing:0.585px;">DIMM</div>
<div class="t" style="left:1227.5px;top:449.4px;font-size:11.5px;color:#707070;letter-spacing:0.001px;">Hardware reserved:</div>
<div class="t" style="left:1342.5px;top:449.4px;font-size:11.5px;color:#000;letter-spacing:-0.118px;">44,7 MB</div>
<div class="r" style="left:810px;top:563px;width:19px;height:19px;border-radius:50%;border:1.4px solid #222;box-sizing:border-box;background:#fff"></div>
<svg class="r" style="left:809.5px;top:562.3px" width="20" height="20" viewBox="0 0 20 20"><path d="M6.2 11.85 L10 8.15 L13.8 11.85" fill="none" stroke="#222" stroke-width="2.1"/></svg>
<div class="t" style="left:836.0px;top:567.7px;font-size:11.5px;color:#000;letter-spacing:-0.030px;">Fewer details</div>
<div class="r" style="left:912px;top:565px;width:1px;height:14px;background:#dcdcdc"></div>
<svg class="r" style="left:920px;top:563.3px" width="18" height="18" viewBox="0 0 18 18"><circle cx="9" cy="8.9" r="7.45" fill="#f6f6f6" stroke="#7a7a7a" stroke-width="1.4"/><path d="M4.6 10.6 A4.7 4.7 0 1 1 13.6 7.6" fill="none" stroke="#adadad" stroke-width="1"/><path d="M13.1 6.6 A4.7 4.7 0 0 1 12.9 11.5" fill="none" stroke="#e9a545" stroke-width="1.3"/><path d="M4.8 4.1 L5.8 3.6 L11.4 9.8 L9.6 11.4 Z" fill="#b5131b"/><path d="M4.8 4.1 L5.3 3.85 L10.5 10.6 L9.6 11.4 Z" fill="#8e0d13"/></svg>
<div class="t" style="left:942.5px;top:567.7px;font-size:11.5px;color:#2a6ebb;letter-spacing:0.187px;">Open Resource Monitor</div>
</body></html>
